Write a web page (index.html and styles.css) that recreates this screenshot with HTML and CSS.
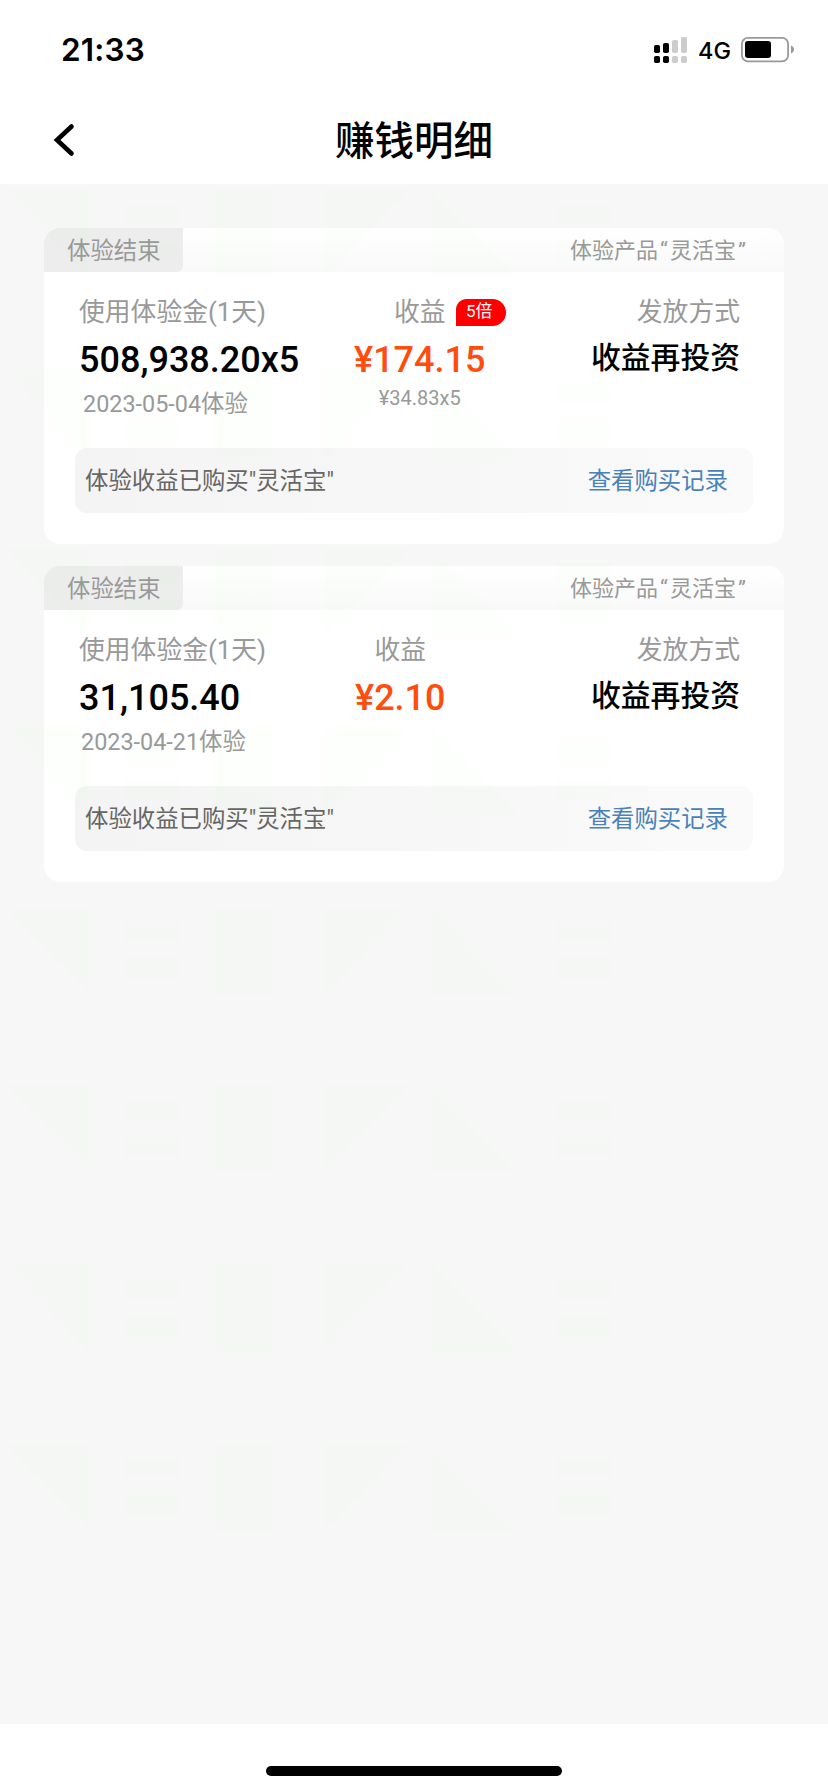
FILE: index.html
```html
<!DOCTYPE html>
<html lang="zh-CN">
<head>
<meta charset="utf-8">
<title>赚钱明细</title>
<link rel="stylesheet" href="styles.css">
</head>
<body>
<div class="screen">
  <header class="top">
    <div class="status">
      <span class="time">21:33</span>
      <div class="status-right">
        <svg class="signal" width="34" height="27" viewBox="0 0 34 27">
          <g fill="#000"><rect x="0" y="8" width="6" height="8" rx="1.8"/><rect x="9" y="6" width="6" height="10" rx="1.8"/><rect x="0" y="19" width="6" height="7" rx="1.8"/><rect x="9" y="19" width="6" height="7" rx="1.8"/></g>
          <g fill="#ccc"><rect x="18" y="3" width="6" height="13" rx="1.8"/><rect x="27" y="0" width="6" height="16" rx="1.8"/><rect x="18" y="19" width="6" height="7" rx="1.8"/><rect x="27" y="19" width="6" height="7" rx="1.8"/></g>
        </svg>
        <span class="net">4G</span>
        <svg class="battery" width="54" height="26" viewBox="0 0 54 26">
          <rect x=".9" y=".9" width="46.2" height="23.4" rx="6" fill="none" stroke="#999" stroke-width="1.8"/>
          <rect x="4" y="4" width="26" height="17" rx="3" fill="#000"/>
          <path d="M50 8.500C54 10 54 15 50 16.500Z" fill="#999"/>
        </svg>
      </div>
    </div>
    <div class="nav">
      <svg class="back" width="22" height="34" viewBox="0 0 22 34"><path d="M18.500 3.500L4 17L18.500 30.500" fill="none" stroke="#000" stroke-width="4.600" stroke-linecap="round" stroke-linejoin="miter"/></svg>
      <h1 class="title">赚钱明细</h1>
    </div>
  </header>

  <main class="list">
    <section class="card">
      <div class="card-head"><span class="tag">体验结束</span><span class="product">体验产品<span class="quote">“</span>灵活宝<span class="quote">”</span></span></div>
      <div class="cols">
        <div class="col">
          <span class="label">使用体验金(1天)</span>
          <span class="amount">508,938.20x5</span>
          <span class="date date-wide">2023-05-04体验</span>
        </div>
        <div class="col col-mid">
          <span class="label with-badge">收益<span class="badge">5倍</span></span>
          <span class="amount gain">¥174.15</span>
          <span class="sub">¥34.83x5</span>
        </div>
        <div class="col col-end">
          <span class="label">发放方式</span>
          <span class="method">收益再投资</span>
        </div>
      </div>
      <div class="note"><span>体验收益已购买"灵活宝"</span><a class="link">查看购买记录</a></div>
    </section>

    <section class="card">
      <div class="card-head"><span class="tag">体验结束</span><span class="product">体验产品<span class="quote">“</span>灵活宝<span class="quote">”</span></span></div>
      <div class="cols">
        <div class="col">
          <span class="label">使用体验金(1天)</span>
          <span class="amount">31,105.40</span>
          <span class="date">2023-04-21体验</span>
        </div>
        <div class="col col-mid col-mid-single">
          <span class="label">收益</span>
          <span class="amount gain">¥2.10</span>
        </div>
        <div class="col col-end">
          <span class="label">发放方式</span>
          <span class="method">收益再投资</span>
        </div>
      </div>
      <div class="note"><span>体验收益已购买"灵活宝"</span><a class="link">查看购买记录</a></div>
    </section>

    <svg class="watermark" width="828" height="1350" viewBox="0 184 828 1350">
      <defs>
        <g id="mark">
          <path d="M4 0H88V88Z"/>
          <path d="M125 15h55v20h-55zM125 52h55v20h-55z"/>
          <path d="M216 0h56v88h-56z"/>
          <path d="M326 0H410L326 88Z"/>
          <path d="M432 0L518 88H432Z"/>
          <path d="M556 15h56v20h-56zM556 52h56v20h-56z"/>
        </g>
      </defs>
      <g fill="#60ff60" fill-opacity=".012">
        <use href="#mark" y="190"/><use href="#mark" y="369"/><use href="#mark" y="548"/><use href="#mark" y="727"/>
        <use href="#mark" y="906"/><use href="#mark" y="1085"/><use href="#mark" y="1264"/><use href="#mark" y="1443"/>
      </g>
    </svg>
  </main>

  <footer class="home"><div class="home-bar"></div></footer>
</div>
</body>
</html>
```
FILE: styles.css
```css
* { box-sizing: border-box; }
body { margin: 0; font-family: Roboto, "Noto Sans CJK SC", sans-serif; background: #fff; }
.screen { width: 828px; height: 1792px; display: flex; flex-direction: column; overflow: hidden; }

.top { height: 184px; background: #fff; flex: none; }
.status { height: 100px; padding: 0 33px 0 61px; display: flex; justify-content: space-between; align-items: center; }
.time { font: 600 31.500px/40px Inter, sans-serif; letter-spacing: .2px; }
.status-right { display: flex; align-items: center; }
.net { font: 500 23.500px/28px Inter, sans-serif; margin: 2px 10px 0 10px; }
.nav { height: 84px; position: relative; display: flex; justify-content: center; }
.back { position: absolute; left: 53px; top: 23px; }
.title { margin: 8px 0 0; font: 500 39.500px/60px "Noto Sans CJK SC", sans-serif; }

.list { height: 1540px; flex: none; position: relative; background: #f7f7f7; padding: 44px 44px 0; display: flex; flex-direction: column; gap: 22px; }
.watermark { position: absolute; left: 0; top: 0; pointer-events: none; }

.card { height: 316px; background: #fff; border-radius: 16px; overflow: hidden; }
.card-head { height: 44px; display: flex; justify-content: space-between; background: linear-gradient(#fff, #f9f9f9); color: #999; }
.tag { width: 139px; padding-left: 23px; background: #ededed; border-bottom-right-radius: 6px; font-size: 23.400px; line-height: 46px; }
.product { padding-right: 36px; font-size: 22px; line-height: 45px; }
.quote { display: inline-block; width: 12px; text-align: center; }

.cols { height: 176px; padding: 21px 44px 0 35px; display: grid; grid-template-columns: 275px auto 1fr; }
.col { display: flex; flex-direction: column; align-items: flex-start; white-space: nowrap; }
.col-mid { align-items: center; }
.col-mid-single { margin-left: 1px; }
.col-end { align-items: flex-end; }
.label { font-size: 25.800px; line-height: 38px; color: #999; }
.with-badge { position: relative; }
.badge { position: absolute; left: 62px; top: 6px; width: 50px; height: 27px; padding-left: 10px; background: #f00; color: #fff; border-radius: 11px 14px 14px 0; font-size: 17px; line-height: 25px; }
.amount { font-size: 36px; font-weight: 500; line-height: 42px; margin-top: 8px; color: #000; }
.gain { color: #ff4d0d; }
.date { font-size: 23.400px; line-height: 34px; margin: 6px 0 0 2px; color: #999; }
.date-wide { margin-left: 4px; }
.sub { font-size: 20px; line-height: 28px; margin-top: 3px; color: #999; }
.method { font: 500 29.800px/44px "Noto Sans CJK SC", sans-serif; margin-top: 2px; color: #000; }

.note { height: 65px; margin: 0 31px; padding: 0 25px 0 10px; border-radius: 12px; background: linear-gradient(90deg, #f4f4f4, #fafafa); display: flex; justify-content: space-between; font-size: 23.400px; line-height: 67px; color: #666; }
.link { color: #4a82b8; }

.home { flex: 1; background: #fff; display: flex; justify-content: center; padding-top: 42px; }
.home-bar { width: 296px; height: 10px; border-radius: 5px; background: #000; }
```
